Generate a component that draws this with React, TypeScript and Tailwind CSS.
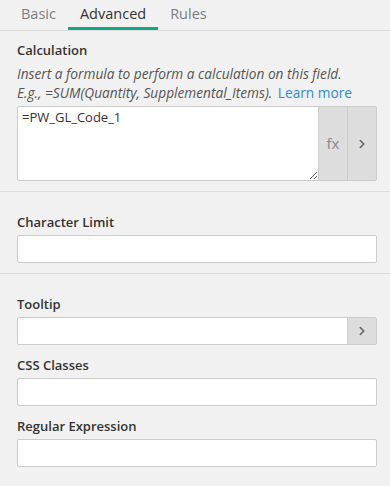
import { ChevronRight } from 'lucide-react'

const font = { fontFamily: '"Open Sans", "Liberation Sans", sans-serif' }

function Label({ children }: { children: React.ReactNode }) {
  return <div className="text-[13px] font-semibold text-[#333] leading-[18px] mb-[4px]">{children}</div>
}

function ArrowButton() {
  return (
    <button className="w-[29px] shrink-0 bg-[#dddddd] border-l border-[#cccccc] flex items-center justify-center text-[#666]">
      <ChevronRight size={14} strokeWidth={2.75} />
    </button>
  )
}

export default function App() {
  return (
    <div className="w-[390px] h-[486px] bg-[#f1f1f1] overflow-hidden" style={font}>
      <div className="flex h-[31px] border-b border-[#dddddd] pl-[9px]">
        {['Basic', 'Advanced', 'Rules'].map(tab => {
          const active = tab === 'Advanced'
          return (
            <div
              key={tab}
              className={
                'px-[12px] text-[14.5px] leading-[27px] border-b-[3px] ' +
                (active ? 'border-[#17a589] text-[#333]' : 'border-transparent text-[#7d7d7d]')
              }
            >
              {tab}
            </div>
          )
        })}
      </div>

      <div className="pl-[17px] pr-[13px] pt-[10px] pb-[10px] border-b border-[#dddddd]">
        <Label>Calculation</Label>
        <p className="text-[13.7px] italic text-[#555] leading-[19px] mb-[4px] mt-[5px]">
          Insert a formula to perform a calculation on this field.
          <br />
          E.g., =SUM(Quantity, Supplemental_Items).{' '}
          <a className="not-italic text-[#2a8ae6] ml-[2px]">Learn more</a>
        </p>
        <div className="flex h-[75px] border border-[#cccccc] rounded-[2px] overflow-hidden">
          <textarea
            className="flex-1 bg-white text-[13px] text-[#333] leading-[20px] px-[4px] py-[0px] outline-none resize-y"
            defaultValue="=PW_GL_Code_1"
          />
          <button className="w-[29px] shrink-0 bg-[#dddddd] border-l border-[#cccccc] text-[15px] text-[#888]">fx</button>
          <ArrowButton />
        </div>
      </div>

      <div className="pl-[17px] pr-[13px] pt-[21px] pb-[10px] border-b border-[#dddddd]">
        <Label>Character Limit</Label>
        <input className="w-full h-[28px] bg-white border border-[#cccccc] rounded-[2px] outline-none block" />
      </div>

      <div className="pl-[17px] pr-[13px] pt-[21px] flex flex-col gap-[11px]">
        <div>
          <Label>Tooltip</Label>
          <div className="flex h-[28px] border border-[#cccccc] rounded-[2px] overflow-hidden">
            <input className="flex-1 bg-white outline-none" />
            <ArrowButton />
          </div>
        </div>
        <div>
          <Label>CSS Classes</Label>
          <input className="w-full h-[28px] bg-white border border-[#cccccc] rounded-[2px] outline-none block" />
        </div>
        <div>
          <Label>Regular Expression</Label>
          <input className="w-full h-[28px] bg-white border border-[#cccccc] rounded-[2px] outline-none block" />
        </div>
      </div>
    </div>
  )
}
